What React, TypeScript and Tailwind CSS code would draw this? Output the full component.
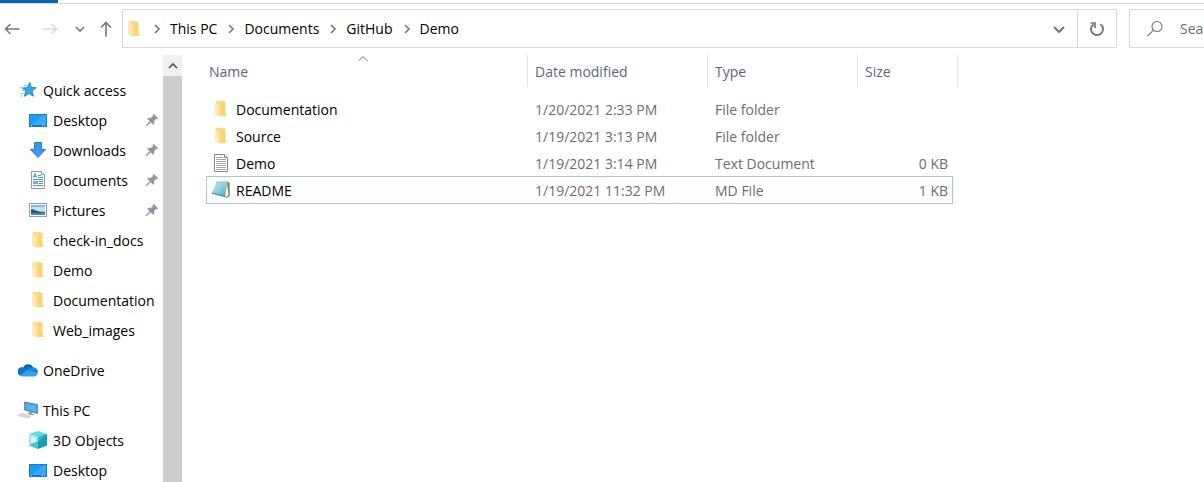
import type { ReactNode } from "react";

function FolderIcon() {
  return (
    <svg width="12" height="16" viewBox="0 0 12 16" aria-hidden="true">
      <path d="M1 0h7l1 1.500V13l2.500.5V15H6L1 13z" fill="#f9dd8b" />
      <path d="M6 .5h4.500V12l1.300 2.500H6z" fill="#f7d474" />
      <path d="M0 1.500L4 4v11.500l-4-2z" fill="#fdeab4" />
      <path d="M4 4l2-1v12.500H4z" fill="#f9dc8c" />
    </svg>
  );
}

function StarIcon() {
  return (
    <svg width="18" height="18" viewBox="0 0 18 18" aria-hidden="true">
      <path d="M11 1.500l1.300 5 5 .2-4.300 3.300 1.500 5.300-4.600-2.900-4.700 3 1.600-5.400-3.500-3 5-.4z" fill="#30a5f0" stroke="#1787d4" strokeWidth="0.900" />
      <path d="M5 4.500h3.500M1 6.500h4M3 9.500h2M1.500 12.500h3M1 15h2" stroke="#7cc7f6" strokeWidth="0.900" />
    </svg>
  );
}

function DesktopIcon() {
  return (
    <svg width="18" height="16" viewBox="0 0 18 16" aria-hidden="true">
      <rect x="0.500" y="2.500" width="17" height="12" fill="#1e9bf6" stroke="#1b7ccc" />
      <path d="M1 14L15 3h2v11z" fill="#35a9fb" />
      <path d="M1 13.500h16" stroke="#1b74bf" />
      <path d="M2 13.500h1M13 13.500h1M15 13.500h1" stroke="#a9d8fb" />
    </svg>
  );
}

function DownloadIcon() {
  return (
    <svg width="18" height="18" viewBox="0 0 18 18" aria-hidden="true">
      <path d="M5.500 1.500h7v7h4L9 16.500 1.500 8.500h4z" fill="#3b98ec" stroke="#2b7fcf" strokeLinejoin="round" />
    </svg>
  );
}

function DocumentIcon() {
  return (
    <svg width="18" height="18" viewBox="0 0 18 18" aria-hidden="true">
      <path d="M2.500.500h10l3 3v14h-13z" fill="#fff" stroke="#8f9aa2" />
      <path d="M12.500.500v3h3" fill="#e6eaed" stroke="#8f9aa2" />
      <path d="M4 6.500l2-4 1.500 4M4.500 5.500h3M9 4.500h3M9 6.500h5M4 8.500h10M10 10.500h4M10 12.500h4M4 14.500h10" stroke="#4b9bda" fill="none" />
      <rect x="4" y="10" width="5" height="3" fill="#6eb0e2" />
    </svg>
  );
}

function PicturesIcon() {
  return (
    <svg width="18" height="16" viewBox="0 0 18 16" aria-hidden="true">
      <rect x="0.500" y="1.500" width="17" height="13" fill="#fff" stroke="#929da6" />
      <rect x="2" y="3" width="14" height="10" fill="#7cbdf0" />
      <path d="M2 6c3-2 7 0 14-1v4H2z" fill="#c6e3f8" />
      <path d="M2 7c3 0 5 2 9 3l5 .5v1H2z" fill="#31594f" />
      <path d="M2 11h14v2H2z" fill="#4687ba" />
    </svg>
  );
}

function CloudIcon() {
  return (
    <svg width="20" height="14" viewBox="0 0 20 14" aria-hidden="true">
      <path d="M5 5a5.500 5.500 0 0 1 10.200-.6L10 9 2 12A4 4 0 0 1 5 4.600z" fill="#0f63b5" />
      <path d="M15 4.300a4.600 4.600 0 0 1 4.500 6.500L9 7c1.500-2 3.500-3 6-2.700z" fill="#1b86dd" />
      <path d="M4.500 4.700c2 0 3 .8 5 2l-6.500 6A4 4 0 0 1 4.500 4.700z" fill="#1672c7" />
      <path d="M2 12.500l7.500-5.700 10 4.200c-.8 1.800-2 2.500-4 2.500H4.500c-1 0-1.800-.3-2.500-1z" fill="#2ba3ef" />
    </svg>
  );
}

function ComputerIcon() {
  return (
    <svg width="20" height="18" viewBox="0 0 20 18" aria-hidden="true">
      <path d="M6.500 1l13 2.500v9L6.500 9z" fill="#2f8fd8" stroke="#6b8191" strokeWidth="0.800" />
      <path d="M7.500 2.200l11 2.200v6.800L7.500 8.300z" fill="#52b4f2" />
      <path d="M11 10.500l3 .8v1.400l3 .8-2 .8-6-1.500 2-.8z" fill="#8d989f" />
      <path d="M4 12.500l9 2.500-3 2-10-2.500z" fill="#e3e6e8" stroke="#bcc2c6" strokeWidth="0.700" />
      <path d="M2.500 13.500l9 2.500" stroke="#bcc2c6" strokeWidth="0.700" />
    </svg>
  );
}

function CubeIcon() {
  return (
    <svg width="18" height="18" viewBox="0 0 18 18" aria-hidden="true">
      <path d="M9 0l9 3-9 3-9-3z" fill="#66d7e2" />
      <path d="M0 3l9 3v12l-9-3.500z" fill="#9fe7ec" />
      <path d="M18 3L9 6v12l9-3.500z" fill="#149eb4" />
      <path d="M0 14.500L9 10v8z" fill="#48c4d0" />
      <path d="M18 3L9 6v5z" fill="#30b8c8" />
      <path d="M2 5.500l5 1.700v3.600L2 12z" fill="#d8f6f6" />
    </svg>
  );
}

function PinIcon() {
  return (
    <svg width="14" height="14" viewBox="0 0 14 14" aria-hidden="true">
      <path d="M8.500 1L13 5.500l-1.300.4-.7-.3-2.300 2.600c.5 1.300.3 2.300-.4 3.300L5.700 9 1.500 13l-.5-.5L5 8.300 2.500 5.700c1-.7 2-.9 3.300-.4L8.400 3l-.3-.7z" fill="#8796a1" stroke="#8796a1" strokeWidth="0.600" />
    </svg>
  );
}

function TextFileIcon() {
  return (
    <svg width="16" height="18" viewBox="0 0 16 18" aria-hidden="true">
      <path d="M1.500.500h10l3 3v14h-13z" fill="#fff" stroke="#858585" />
      <path d="M11.500.500v3h3" fill="#e3e3e3" stroke="#858585" />
      <path d="M3 3.500h7M3 5.500h10M3 7.500h10M3 9.500h10M3 11.500h10M3 13.500h10M3 15.500h10" stroke="#a6a6a6" />
    </svg>
  );
}

function NotepadIcon() {
  return (
    <svg width="20" height="18" viewBox="0 0 20 18" aria-hidden="true">
      <defs>
        <linearGradient id="notepad-cover" x1="0" y1="0" x2="1" y2="1">
          <stop offset="0" stopColor="#c3e8ef" />
          <stop offset="0.500" stopColor="#8fcfde" />
          <stop offset="1" stopColor="#4a9fb6" />
        </linearGradient>
      </defs>
      <path d="M16 1l2.800.8V15l-2.800 2-2-1z" fill="#8d8a7a" />
      <path d="M16 3.500l1.500 10-1.700 2.500-2-1z" fill="#f1f1ea" />
      <path d="M5.500 1.500L16 1l-2.200 15L.500 12.500z" fill="url(#notepad-cover)" />
      <path d="M.500 12.500L13.800 16l.3-1.200L1 11.600z" fill="#4794aa" />
      <path d="M5.500 1.200L17 .7" stroke="#7d8f92" strokeWidth="1.200" strokeDasharray="1 1" />
    </svg>
  );
}

function Chevron({ className }: { className?: string }) {
  return (
    <svg width="12" height="12" viewBox="0 0 12 12" aria-hidden="true" className={className}>
      <path d="M2 4l4 4 4-4" fill="none" stroke="currentColor" strokeWidth="1.600" />
    </svg>
  );
}

function Arrow({ className }: { className?: string }) {
  return (
    <svg width="16" height="16" viewBox="0 0 16 16" aria-hidden="true" className={className}>
      <path d="M15.500 8H1.500M6.500 3l-5 5 5 5" fill="none" stroke="currentColor" strokeWidth="1.600" />
    </svg>
  );
}

type NavEntry = { label: string; icon: ReactNode; pinned?: boolean };
type NavGroup = { root: NavEntry; children: NavEntry[] };

const groups: NavGroup[] = [
  {
    root: { label: "Quick access", icon: <StarIcon /> },
    children: [
      { label: "Desktop", icon: <DesktopIcon />, pinned: true },
      { label: "Downloads", icon: <DownloadIcon />, pinned: true },
      { label: "Documents", icon: <DocumentIcon />, pinned: true },
      { label: "Pictures", icon: <PicturesIcon />, pinned: true },
      { label: "check-in_docs", icon: <FolderIcon /> },
      { label: "Demo", icon: <FolderIcon /> },
      { label: "Documentation", icon: <FolderIcon /> },
      { label: "Web_images", icon: <FolderIcon /> },
    ],
  },
  { root: { label: "OneDrive", icon: <CloudIcon /> }, children: [] },
  {
    root: { label: "This PC", icon: <ComputerIcon /> },
    children: [
      { label: "3D Objects", icon: <CubeIcon /> },
      { label: "Desktop", icon: <DesktopIcon /> },
    ],
  },
];

const files = [
  { name: "Documentation", date: "1/20/2021 2:33 PM", type: "File folder", size: "", icon: <FolderIcon /> },
  { name: "Source", date: "1/19/2021 3:13 PM", type: "File folder", size: "", icon: <FolderIcon /> },
  { name: "Demo", date: "1/19/2021 3:14 PM", type: "Text Document", size: "0 KB", icon: <TextFileIcon /> },
  { name: "README", date: "1/19/2021 11:32 PM", type: "MD File", size: "1 KB", icon: <NotepadIcon />, selected: true },
];

const path = ["This PC", "Documents", "GitHub", "Demo"];

function NavLink({ entry, nested }: { entry: NavEntry; nested?: boolean }) {
  return (
    <a href="#" className={`flex h-[30px] items-center whitespace-nowrap pr-1 ${nested ? "pl-7" : "pl-[18px]"}`}>
      <span className="flex w-5 shrink-0 justify-center">{entry.icon}</span>
      <span className="ml-[5px] pt-0.5">{entry.label}</span>
      {entry.pinned && (
        <span className="ml-auto"><PinIcon /></span>
      )}
    </a>
  );
}

function Toolbar() {
  return (
    <header className="shrink-0 pb-[7px]">
      <div className="mb-[5px] h-1 border-b border-[#dadada]">
        <div className="h-[3px] w-[58px] bg-[#0a63b8]" />
      </div>
      <div className="flex h-[39px] items-stretch">
        <div className="flex w-[122px] shrink-0 items-center pl-1 text-[#777]">
          <button aria-label="Back"><Arrow /></button>
          <button aria-label="Forward" className="ml-[22px] text-[#d9d9d9]"><Arrow className="rotate-180" /></button>
          <button aria-label="Recent locations" className="ml-4"><Chevron /></button>
          <button aria-label="Up" className="ml-3"><Arrow className="rotate-90" /></button>
        </div>
        <div className="flex min-w-0 flex-1 items-center border border-[#d9d9d9]">
          <span className="ml-[5px] mr-1"><FolderIcon /></span>
          <nav aria-label="Path" className="flex flex-1 items-center gap-px">
            {path.map((part) => (
              <div key={part} className="flex items-center">
                <Chevron className="mx-[7px] -rotate-90 text-[#777]" />
                <a href="#">{part}</a>
              </div>
            ))}
          </nav>
          <button aria-label="Previous locations" className="px-3 text-[#777]">
            <svg width="12" height="12" viewBox="0 0 12 12" aria-hidden="true">
              <path d="M1 4l5 5 5-5" fill="none" stroke="currentColor" strokeWidth="2" />
            </svg>
          </button>
          <button aria-label="Refresh" className="flex w-[39px] items-center justify-center self-stretch border-l border-[#d9d9d9] text-[#777]">
            <svg width="16" height="16" viewBox="0 0 16 16" aria-hidden="true">
              <path d="M11.500 3.200A6 6 0 1 1 4.500 3.200" fill="none" stroke="currentColor" strokeWidth="2" />
              <path d="M1.500 2H6V7" fill="none" stroke="currentColor" strokeWidth="1.700" />
            </svg>
          </button>
        </div>
        <label className="ml-3 flex w-[75px] shrink-0 items-center border border-r-0 border-[#d9d9d9] pl-4">
          <svg width="18" height="18" viewBox="0 0 18 18" aria-hidden="true" className="shrink-0 text-[#777]">
            <circle cx="11" cy="6.500" r="5" fill="none" stroke="currentColor" strokeWidth="1.100" />
            <path d="M7.500 10.200L1.500 16" stroke="currentColor" strokeWidth="1.100" />
          </svg>
          <input aria-label="Search" placeholder="Sea" className="ml-4 w-full min-w-0 outline-none placeholder:text-[#6d6d6d]" />
        </label>
      </div>
    </header>
  );
}

function Sidebar() {
  return (
    <aside className="flex w-[182px] shrink-0">
      <nav aria-label="Folders" className="flex w-[163px] flex-col gap-[10px] overflow-hidden pt-5">
        {groups.map((group) => (
          <div key={group.root.label}>
            <NavLink entry={group.root} />
            {group.children.map((entry) => (
              <NavLink key={entry.label} entry={entry} nested />
            ))}
          </div>
        ))}
      </nav>
      <div className="flex flex-1 flex-col bg-[#cdcdcd]">
        <button aria-label="Scroll up" className="flex h-[21px] items-center justify-center bg-[#f0f0f0] text-[#505050]">
          <Chevron className="rotate-180" />
        </button>
      </div>
    </aside>
  );
}

const headInner = "flex h-8 items-center border-r border-[#e2e2e2] pt-0.5";

function FileTable() {
  return (
    <table className="w-[752px] table-fixed border-separate border-spacing-0 text-left">
      <colgroup>
        <col className="w-[322px]" />
        <col className="w-[180px]" />
        <col className="w-[150px]" />
        <col className="w-[95px]" />
        <col className="w-[5px]" />
      </colgroup>
      <thead className="text-[#5a6680]">
        <tr>
          <th className="p-0 pb-2 font-normal" aria-sort="ascending">
            <div className={`relative pl-[3px] ${headInner}`}>
              Name
              <svg width="12" height="8" viewBox="0 0 12 8" aria-hidden="true" className="absolute left-[49%] top-0 -translate-x-1/2">
                <path d="M1.500 6L6 1.500l4.500 4.500" fill="none" stroke="#777" />
              </svg>
            </div>
          </th>
          <th className="p-0 pb-2 font-normal"><div className={`pl-[7px] ${headInner}`}>Date modified</div></th>
          <th className="p-0 pb-2 font-normal"><div className={`pl-[7px] ${headInner}`}>Type</div></th>
          <th className="p-0 pb-2 font-normal" colSpan={2}><div className={`pl-[7px] ${headInner}`}>Size</div></th>
        </tr>
      </thead>
      <tbody className="text-[#6d6d6d]">
        {files.map((file) => {
          const edge = file.selected ? "h-7 border-y border-[#a3c9e2]" : "h-[27px]";
          return (
            <tr key={file.name}>
              <td className={`p-0 text-black ${edge} ${file.selected ? "border-l" : "pl-px"}`}>
                <div className="flex items-center pl-1">
                  <span className="flex w-5 justify-center">{file.icon}</span>
                  <span className="ml-[5px] pt-0.5">{file.name}</span>
                </div>
              </td>
              <td className={`p-0 pl-[7px] pt-0.5 ${edge}`}>{file.date}</td>
              <td className={`p-0 pl-[7px] pt-0.5 ${edge}`}>{file.type}</td>
              <td className={`p-0 pt-0.5 text-right ${edge} ${file.selected ? "border-r pr-1" : "pr-[5px]"}`}>{file.size}</td>
              <td className="p-0" />
            </tr>
          );
        })}
      </tbody>
    </table>
  );
}

export default function App() {
  return (
    <div className="flex h-screen flex-col overflow-hidden bg-white font-['Open_Sans','Noto_Sans',sans-serif] text-[14px] leading-5 text-black">
      <Toolbar />
      <div className="flex min-h-0 flex-1">
        <Sidebar />
        <main className="min-w-0 flex-1 overflow-hidden pl-6">
          <FileTable />
        </main>
      </div>
    </div>
  );
}
